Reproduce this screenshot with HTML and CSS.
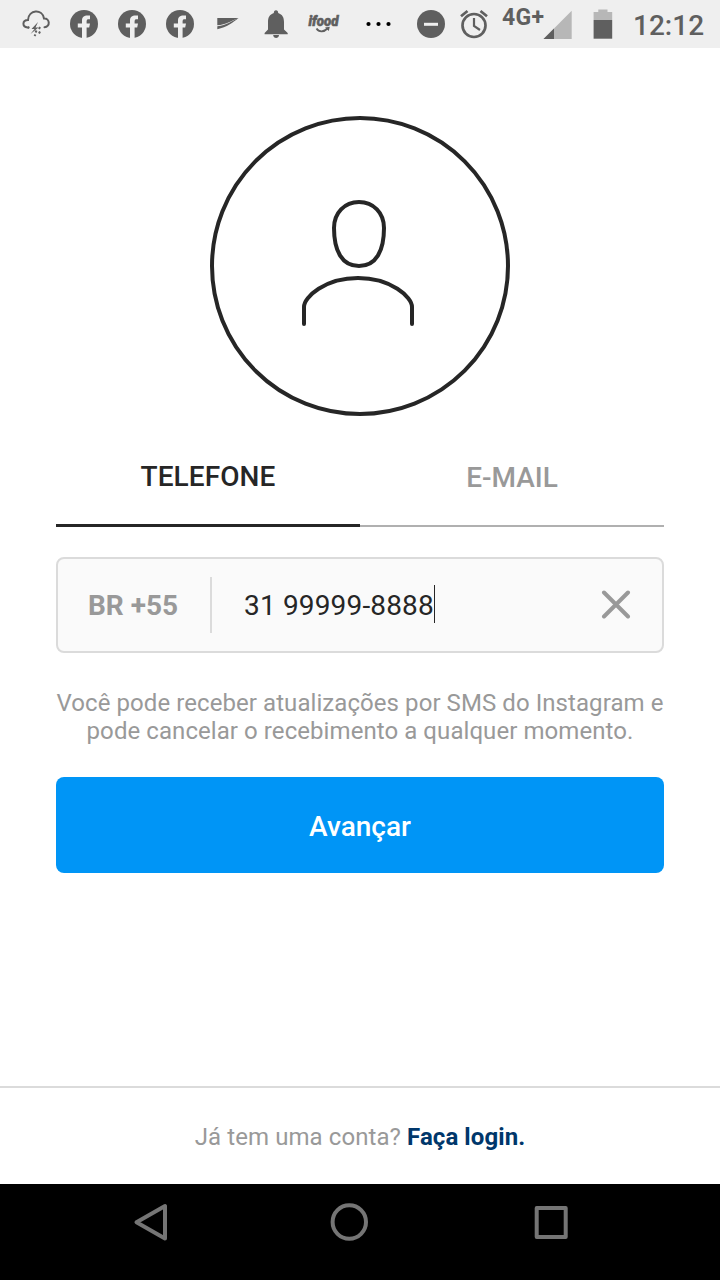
FILE: index.html
```html
<!DOCTYPE html>
<html lang="pt-BR">
<head>
    <meta charset="UTF-8">
    <meta name="viewport" content="width=device-width, initial-scale=1.0">
    <title>Cadastro</title>
    <link rel="stylesheet" href="styles.css">
</head>
<body>

    <div class="status-bar">
        <div class="notifications">
            <svg width="48" height="48" viewBox="0 0 48 48">
                <path d="M15.500 27.500C10 27 10 20 16 20C16.500 9.500 30.500 8.500 32 18.500C38 18 38.500 27 32.500 27.300" fill="none" stroke="#5f5f5f" stroke-width="2" stroke-linecap="round"/>
                <path d="M26 22L19.500 29H22.500L18.500 34L26.500 27.500H23.500Z" fill="#5f5f5f"/>
                <path d="M17 26.500l-1 2M28 27l-1 2M28 31.500l-1 2M24.500 30.500l-1 2M23.500 34.500l-1 1.500" stroke="#5f5f5f" stroke-width="2"/>
            </svg>
            <svg width="48" height="48" viewBox="0 0 48 48">
                <circle cx="24" cy="24" r="14" fill="#5f5f5f"/>
                <path d="M22 38V27.500H17.800V23.500H22V20.500C22 16.500 24.500 14.900 30 15.600V19.300C27.500 19 26.600 19.400 26.600 21.500V23.500H30L29.200 27.500H26.600V38Z" fill="#efefef"/>
            </svg>
            <svg width="48" height="48" viewBox="0 0 48 48">
                <circle cx="24" cy="24" r="14" fill="#5f5f5f"/>
                <path d="M22 38V27.500H17.800V23.500H22V20.500C22 16.500 24.500 14.900 30 15.600V19.300C27.500 19 26.600 19.400 26.600 21.500V23.500H30L29.200 27.500H26.600V38Z" fill="#efefef"/>
            </svg>
            <svg width="48" height="48" viewBox="0 0 48 48">
                <circle cx="24" cy="24" r="14" fill="#5f5f5f"/>
                <path d="M22 38V27.500H17.800V23.500H22V20.500C22 16.500 24.500 14.900 30 15.600V19.300C27.500 19 26.600 19.400 26.600 21.500V23.500H30L29.200 27.500H26.600V38Z" fill="#efefef"/>
            </svg>
            <svg width="48" height="48" viewBox="0 0 48 48">
                <path d="M13.300 18H34.500C27 21 22 24.500 13.300 25.300Z" fill="#5f5f5f"/>
                <path d="M13.300 26.300C23 25 27 21.500 34.500 18C29 22.500 23 27 13.300 29.300Z" fill="#5f5f5f"/>
            </svg>
            <svg width="48" height="48" viewBox="0 0 48 48">
                <path d="M24 10.300C25.500 10.300 26.200 11.500 26.200 13C30.500 14.500 32 17.500 32 22V29.500L35.700 33V34.200H12.600V33L16 29.500V22C16 17.500 17.500 14.500 21.800 13C21.800 11.500 22.500 10.300 24 10.300Z" fill="#5f5f5f"/>
                <path d="M21.200 35H27C27 39 21.200 39 21.200 35Z" fill="#5f5f5f"/>
            </svg>
            <svg width="48" height="48" viewBox="0 0 48 48">
                <text x="8.500" y="26" textLength="30" lengthAdjust="spacingAndGlyphs" class="ifood">ifood</text>
                <path d="M16.500 28.500C19 32.500 24 32 27.500 28.500" fill="none" stroke="#5f5f5f" stroke-width="1.800"/>
                <path d="M25 27.500L29.800 26.800L28.800 31Z" fill="#5f5f5f"/>
            </svg>
            <svg width="60" height="48" viewBox="0 0 60 48">
                <circle cx="20.500" cy="24" r="2.100"/>
                <circle cx="30.500" cy="24" r="2.100"/>
                <circle cx="40.500" cy="24" r="2.100"/>
            </svg>
        </div>
        <div class="system">
            <svg width="30" height="48" viewBox="0 0 30 48">
                <circle cx="15" cy="24" r="14" fill="#5f5f5f"/>
                <path d="M8 24.300H22" stroke="#efefef" stroke-width="3"/>
            </svg>
            <svg class="alarm" width="28" height="48" viewBox="0 0 28 48" fill="none" stroke="#5f5f5f">
                <circle cx="14" cy="25.500" r="11.500" stroke-width="2.700"/>
                <path d="M1 16.300L7.500 11M27 16.300L20.500 11" stroke-width="2.700"/>
                <path d="M14 18V26L20 30" stroke-width="2.200"/>
            </svg>
            <span class="network">4G+</span>
            <svg class="signal" width="29" height="48" viewBox="0 0 29 48">
                <path d="M.5 39L28.700 10.800V39Z" fill="#b7b7b7"/>
                <path d="M.5 39L11 28.500V39Z" fill="#5f5f5f"/>
            </svg>
            <svg class="battery" width="20" height="48" viewBox="0 0 20 48">
                <path d="M.6 12H5.300V9.500H14.500V12H19.200V20H.6Z" fill="#b7b7b7"/>
                <path d="M.6 20H19.200V38.700H.6Z" fill="#5f5f5f"/>
            </svg>
            <span class="clock">12:12</span>
        </div>
    </div>

    <main class="signup">
        <svg class="avatar" width="300" height="300" viewBox="0 0 300 300" fill="none" stroke="#262626" stroke-width="4">
            <circle cx="150" cy="150" r="148"/>
            <path d="M149 86C163.500 86 174 97 174 112C174 135 166 150 149 150C132 150 124 135 124 112C124 97 134.500 86 149 86Z"/>
            <path d="M94 208V191C94 181 115 162 148 162C181 162 202 181 202 191V208" stroke-linecap="round"/>
        </svg>

        <div class="tabs">
            <div class="tab active">TELEFONE</div>
            <div class="tab">E-MAIL</div>
        </div>

        <div class="phone-field">
            <span class="country">BR +55</span>
            <span class="number">31 99999-8888</span>
            <span class="caret"></span>
            <svg class="clear" width="30" height="30" viewBox="0 0 30 30">
                <path d="M3 2.500L27 26.500M27 2.500L3 26.500" stroke="#999" stroke-width="4" stroke-linecap="round"/>
            </svg>
        </div>

        <p class="notice">Você pode receber atualizações por SMS do Instagram e<br>pode cancelar o recebimento a qualquer momento.</p>

        <button type="button" class="btn">Avançar</button>
    </main>

    <div class="login">Já tem uma conta? <a href="#">Faça login.</a></div>

    <div class="nav-bar">
        <svg width="40" height="40" viewBox="0 0 40 40">
            <path d="M4.500 20.300L33 4V36.500Z"/>
        </svg>
        <svg width="40" height="40" viewBox="0 0 40 40">
            <circle cx="20.300" cy="20" r="16.700"/>
        </svg>
        <svg width="40" height="40" viewBox="0 0 40 40">
            <rect x="5.700" y="6" width="29" height="29"/>
        </svg>
    </div>

</body>
</html>
```

FILE: styles.css
```css
* {
    margin: 0;
    padding: 0;
    box-sizing: border-box;
    font-family: Roboto, sans-serif;
}
body {
    display: flex;
    flex-direction: column;
    height: 1280px;
    width: 720px;
    background: #fff;
    color: #262626;
}
svg {
    display: block;
    flex-shrink: 0;
}
.status-bar {
    display: flex;
    justify-content: space-between;
    height: 48px;
    padding: 0 16px 0 12px;
    background: #efefef;
    color: #5f5f5f;
}
.notifications, .system {
    display: flex;
}
.ifood {
    font-size: 14px;
    font-weight: 900;
    font-style: italic;
    fill: #5f5f5f;
    stroke: #5f5f5f;
    stroke-width: 0.6px;
}
.alarm {
    margin-left: 14px;
}
.network {
    margin-left: 14px;
    padding-top: 4px;
    width: 41px;
    font-size: 23px;
    line-height: 27px;
    font-weight: 700;
    letter-spacing: 0.3px;
    white-space: nowrap;
}
.battery {
    margin-left: 21px;
}
.clock {
    margin-left: 20px;
    width: 71px;
    font-size: 28px;
    line-height: 51px;
    font-weight: 500;
}
.signup {
    flex: 1;
    padding: 68px 56px 0;
}
.avatar {
    margin: 0 auto;
}
.tabs {
    display: flex;
    height: 111px;
}
.tab {
    flex: 1;
    padding-top: 23px;
    border-bottom: 2px solid #b0b0b0;
    color: #999;
    font-size: 28px;
    line-height: 78px;
    font-weight: 500;
    text-align: center;
}
.tab.active {
    padding-top: 22px;
    border-bottom: 3px solid #262626;
    color: #262626;
    letter-spacing: 0.1px;
}
.phone-field {
    display: flex;
    align-items: center;
    height: 96px;
    margin-top: 30px;
    padding: 0 31px 0 30px;
    background: #fafafa;
    border: 2px solid #dbdbdb;
    border-radius: 8px;
    font-size: 28px;
}
.country {
    width: 124px;
    height: 56px;
    line-height: 57px;
    border-right: 2px solid #dbdbdb;
    color: #999;
    font-weight: 700;
}
.number {
    margin-left: 32px;
    letter-spacing: 0.16px;
}
.caret {
    width: 1px;
    height: 38px;
    margin-bottom: 2px;
    background: #262626;
}
.clear {
    margin-left: auto;
}
.notice {
    margin: 36px -10px 0;
    color: #999;
    font-size: 24px;
    line-height: 28px;
    letter-spacing: 0.07px;
    text-align: center;
}
.btn {
    display: block;
    width: 100%;
    height: 96px;
    margin-top: 32px;
    padding-top: 2px;
    border: none;
    border-radius: 8px;
    background: #0095f6;
    color: white;
    font-size: 28px;
    font-weight: 500;
}
.login {
    height: 98px;
    border-top: 2px solid #dbdbdb;
    color: #999;
    font-size: 24px;
    line-height: 98px;
    letter-spacing: 0.08px;
    text-align: center;
}
.login a {
    color: #00376b;
    font-weight: 700;
    text-decoration: none;
}
.nav-bar {
    display: flex;
    gap: 162px;
    height: 96px;
    padding: 18px 0 0 132px;
    background: #000;
}
.nav-bar svg {
    fill: none;
    stroke: #757575;
    stroke-width: 4;
    stroke-linejoin: round;
}
.nav-bar svg:nth-child(2) {
    margin-left: -5px;
}
```
